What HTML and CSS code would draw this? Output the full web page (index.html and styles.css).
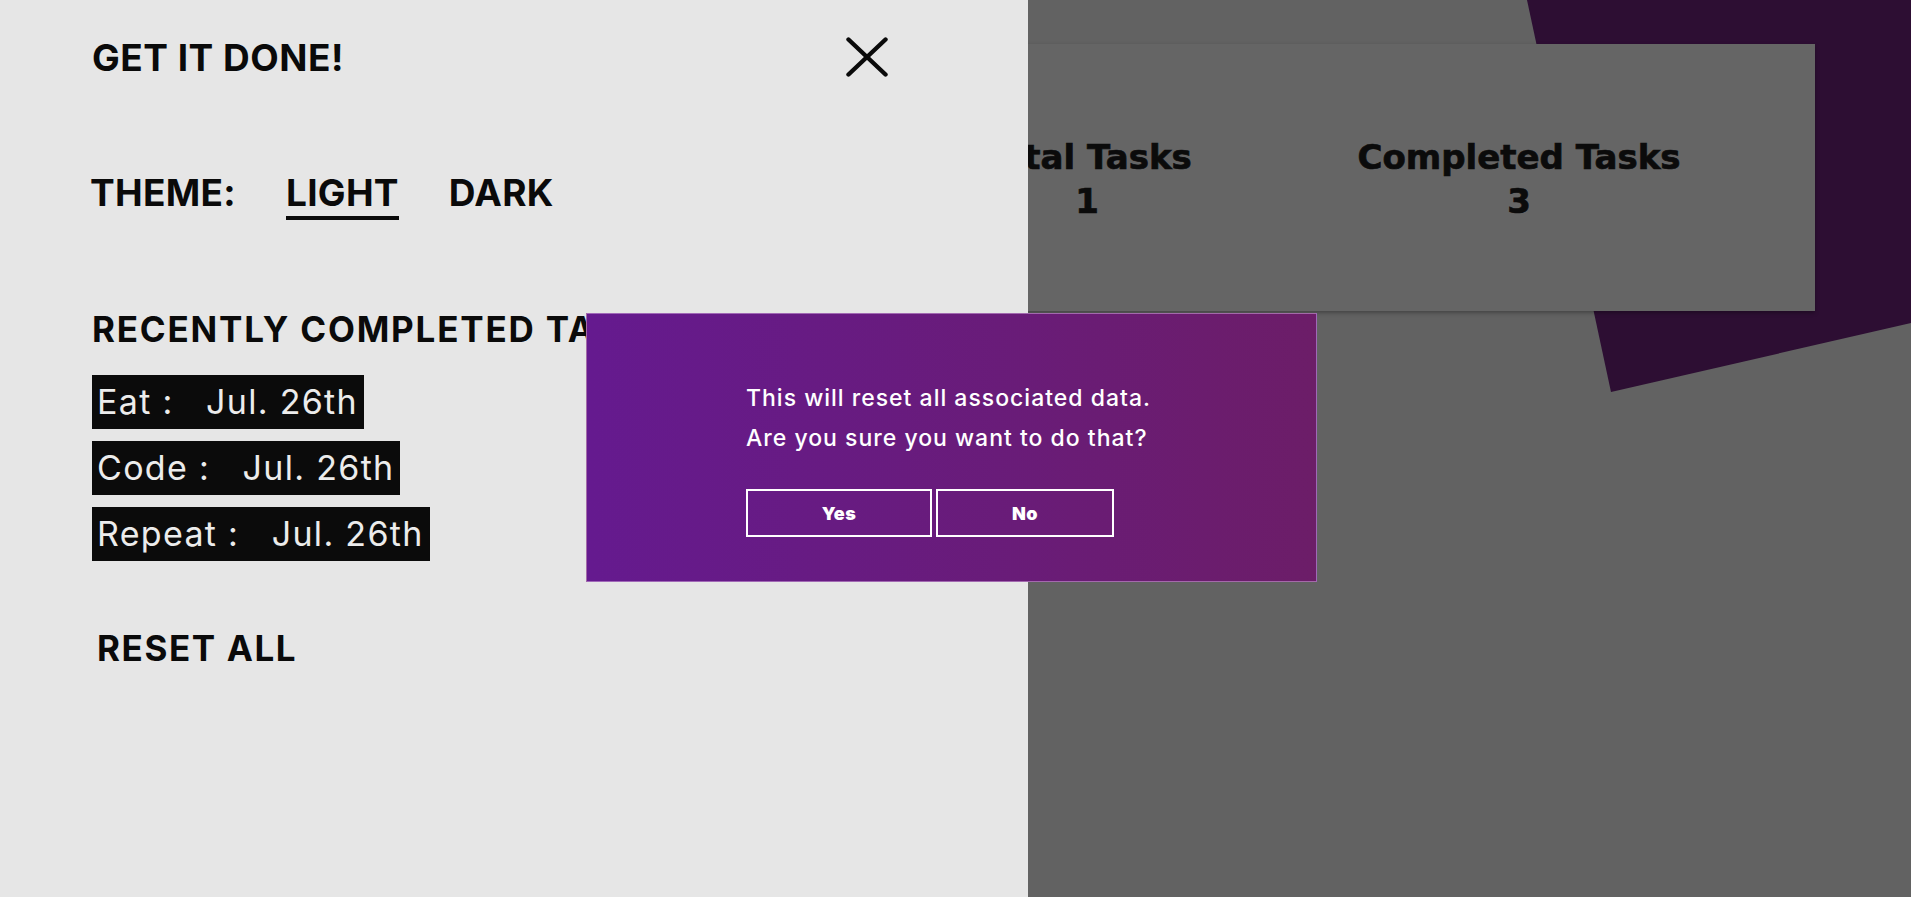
FILE: index.html
```html
<!DOCTYPE html>
<html lang="en">
<head>
<meta charset="utf-8">
<title>Get It Done</title>
<link rel="stylesheet" href="styles.css">
</head>
<body>
<div class="app">
  <div class="shape"></div>
  <section class="stats-card">
    <div class="stat">
      <div class="stat-label">Total Tasks</div>
      <div class="stat-value">1</div>
    </div>
    <div class="stat">
      <div class="stat-label">Completed Tasks</div>
      <div class="stat-value">3</div>
    </div>
  </section>
</div>

<aside class="panel">
  <header class="panel-header">
    <h1 class="title">GET IT DONE!</h1>
    <svg class="close" width="42" height="40" viewBox="0 0 42 40" aria-label="Close">
      <line x1="2.5" y1="2.5" x2="39.5" y2="37.5" stroke="#0a0a0a" stroke-width="4.4" stroke-linecap="round"/>
      <line x1="39.5" y1="2.5" x2="2.5" y2="37.5" stroke="#0a0a0a" stroke-width="4.4" stroke-linecap="round"/>
    </svg>
  </header>

  <div class="theme-row">
    <span class="theme-label">THEME:</span>
    <span class="theme-opt active">LIGHT</span>
    <span class="theme-opt">DARK</span>
  </div>

  <h2 class="recent-title">RECENTLY COMPLETED TASKS</h2>
  <ul class="recent-list">
    <li class="recent-item">Eat :   Jul. 26th</li>
    <li class="recent-item">Code :   Jul. 26th</li>
    <li class="recent-item">Repeat :   Jul. 26th</li>
  </ul>

  <button class="reset">RESET ALL</button>
</aside>

<div class="modal">
  <p class="modal-text">This will reset all associated data.</p>
  <p class="modal-text">Are you sure you want to do that?</p>
  <div class="modal-actions">
    <button class="modal-btn yes">Yes</button>
    <button class="modal-btn no">No</button>
  </div>
</div>
</body>
</html>
```

FILE: styles.css
```css
* { box-sizing: border-box; }

html, body {
  margin: 0;
  padding: 0;
  width: 1911px;
  height: 897px;
  overflow: hidden;
}

body {
  font-family: "Inter", "Liberation Sans", sans-serif;
  color: #0a0a0a;
  background: #626262;
  position: relative;
}

/* main app (dimmed) */
.app {
  position: relative;
  width: 1911px;
  height: 897px;
  padding-top: 44px;
  background: #626262;
  overflow: hidden;
}

.shape {
  position: absolute;
  inset: 0;
  background: #2d0e33;
  clip-path: polygon(1527px 0, 1911px 0, 1911px 323px, 1611px 392px);
}

.stats-card {
  position: relative;
  margin-left: 96px;
  width: 1719px;
  height: 267px;
  background: #656565;
  box-shadow: 0 2px 4px rgba(0, 0, 0, 0.3);
  display: flex;
  justify-content: flex-end;
  padding: 91px 80px 0 0;
}

.stat {
  width: 432px;
  text-align: center;
  font-family: "DejaVu Sans", "Inter", sans-serif;
  font-weight: 700;
  font-size: 34px;
  line-height: 44px;
  color: #0b0b0b;
  -webkit-text-stroke: 0.7px #0b0b0b;
  white-space: nowrap;
}

/* settings drawer */
.panel {
  position: absolute;
  left: 0;
  top: 0;
  width: 1028px;
  height: 897px;
  background: #e6e6e6;
  padding: 37px 0 0 92px;
  display: flex;
  flex-direction: column;
  align-items: flex-start;
}

.panel-header {
  width: 796px;
  height: 40px;
  display: flex;
  align-items: center;
  justify-content: space-between;
}

.title {
  margin: 0;
  font-size: 37px;
  line-height: 40px;
  font-weight: 700;
  letter-spacing: 0.5px;
  padding-top: 2px;
}

.close { display: block; }

.theme-row {
  margin-top: 96px;
  margin-left: -2px;
  display: flex;
  gap: 50px;
  font-size: 37px;
  font-weight: 700;
  line-height: 40px;
  letter-spacing: 0.3px;
}

.theme-opt {
  display: inline-block;
}

.theme-opt.active {
  border-bottom: 4px solid #0a0a0a;
  padding-bottom: 3px;
}

.recent-title {
  margin: 89px 0 0 0;
  font-size: 35px;
  line-height: 40px;
  font-weight: 700;
  letter-spacing: 1.8px;
  white-space: nowrap;
}

.recent-list {
  list-style: none;
  margin: 26px 0 0 0;
  padding: 0;
  display: flex;
  flex-direction: column;
  align-items: flex-start;
  gap: 12px;
}

.recent-item {
  background: #0b0b0b;
  color: #ececec;
  font-size: 34px;
  line-height: 54px;
  height: 54px;
  padding: 0 6px 0 5px;
  letter-spacing: 1.3px;
  white-space: pre;
  font-weight: 400;
}

.reset {
  margin: 67px 0 0 0;
  padding: 0 5px;
  border: 0;
  background: transparent;
  font-family: inherit;
  font-size: 35px;
  line-height: 40px;
  font-weight: 700;
  letter-spacing: 1.6px;
  color: #0a0a0a;
}

/* confirmation modal */
.modal {
  position: absolute;
  left: 586px;
  top: 313px;
  width: 731px;
  height: 269px;
  background: linear-gradient(90deg, #651a8f 0%, #6c1d68 100%);
  border: 1px solid rgba(210, 170, 220, 0.55);
  padding: 64px 0 0 159px;
  color: #ffffff;
}

.modal-text {
  margin: 0;
  font-size: 23px;
  line-height: 40px;
  font-weight: 500;
  letter-spacing: 1px;
}

.modal-actions {
  margin-top: 31px;
  display: flex;
  gap: 4px;
}

.modal-btn {
  height: 48px;
  border: 2px solid #ffffff;
  background: transparent;
  color: #ffffff;
  font-family: inherit;
  font-size: 18px;
  font-weight: 900;
  letter-spacing: 0.5px;
  padding: 0;
}

.modal-btn.yes { width: 186px; }
.modal-btn.no { width: 178px; }
```
